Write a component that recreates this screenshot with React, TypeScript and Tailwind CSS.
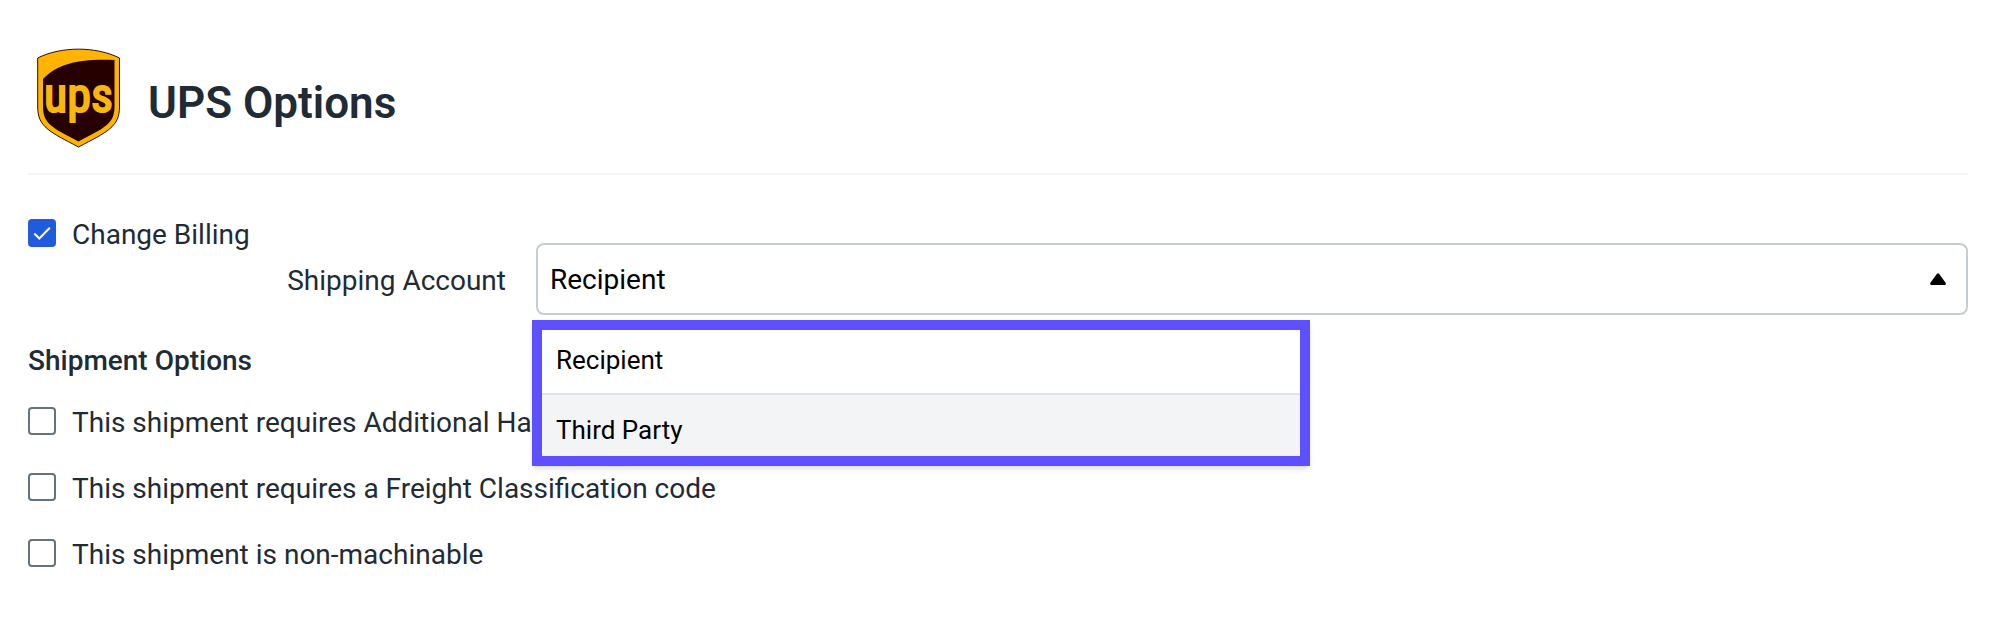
import { useState } from 'react';

function UpsLogo() {
  return (
    <svg role="img" aria-label="UPS" viewBox="0 0 84 100" className="h-[100px] w-[84px] shrink-0">
      <path
        d="M0.700 10 C24 -1.800 59 -1.800 82.500 10 V59 C82.500 79 70 84 41.500 99 C13 84 0.700 79 0.700 59 Z"
        fill="#ffb500"
        stroke="#2b0b08"
        strokeWidth="1"
      />
      <path
        d="M6 31 C22 14 47 10.500 77.500 12 V59 C77.500 76 67 80 41.500 93.500 C16 80 6 76 6 59 Z"
        fill="#260000"
      />
      <text
        x="41.500"
        y="64"
        textAnchor="middle"
        fill="#f8b70a"
        stroke="#f8b70a"
        strokeWidth="2"
        className="font-['Liberation_Sans_Narrow','Roboto_Condensed',Roboto,sans-serif] text-[48px] font-normal"
      >
        ups
      </text>
    </svg>
  );
}

function CheckOption({ label, initial = false }: { label: string; initial?: boolean }) {
  const [checked, setChecked] = useState(initial);
  return (
    <label className="flex w-fit items-start gap-4 leading-8">
      <span className="grid size-7 shrink-0">
        <input
          type="checkbox"
          checked={checked}
          onChange={(e) => setChecked(e.target.checked)}
          className="col-start-1 row-start-1 size-7 appearance-none rounded border-2 border-[#637381] bg-white checked:border-[#1f5bdc] checked:bg-[#1f5bdc]"
        />
        {checked && (
          <svg viewBox="0 0 28 28" fill="none" className="pointer-events-none col-start-1 row-start-1 size-7">
            <path d="M6.300 14.500 L11.300 19.500 L21.800 8.800" stroke="white" strokeWidth="2" />
          </svg>
        )}
      </span>
      {label}
    </label>
  );
}

const accounts = ['Recipient', 'Third Party'];

export default function App() {
  const [account, setAccount] = useState('Recipient');
  return (
    <main className="bg-white px-7 pt-12 pb-14 font-[Roboto,sans-serif] text-[28px] text-[#212b36]">
      <header className="flex items-center gap-[27px] border-b-2 border-[#f3f4f5] pb-[25px] pl-[9px]">
        <UpsLogo />
        <h1 className="pt-2.5 text-[44px] leading-[44px] font-semibold">UPS Options</h1>
      </header>

      <section className="mt-11 grid grid-cols-[508px_1fr]">
        <div className="flex flex-col gap-[14px]">
          <CheckOption label="Change Billing" initial />
          <label htmlFor="account" className="self-end pr-[30px] leading-8">
            Shipping Account
          </label>
        </div>
        <div className="relative mt-6">
          <div className="grid items-center">
            <select
              id="account"
              value={account}
              onChange={(e) => setAccount(e.target.value)}
              className="col-start-1 row-start-1 h-[72px] w-full appearance-none rounded-lg border-2 border-[#c4cdd5] bg-white px-3 pt-0.5 text-black"
            >
              {accounts.map((name) => (
                <option key={name}>{name}</option>
              ))}
            </select>
            <svg
              viewBox="0 0 16 12"
              className="pointer-events-none col-start-1 row-start-1 mr-[22px] h-3 w-4 justify-self-end"
            >
              <path d="M7 0.800 Q8 -0.400 9 0.800 L15.600 9.800 Q16.400 12 14.500 12 H1.500 Q-0.400 12 0.400 9.800 Z" fill="black" />
            </svg>
          </div>
          <ul
            role="listbox"
            aria-label="Shipping Account"
            className="absolute top-[77px] -left-1 z-10 w-[778px] border-10 border-[#5c50ff] bg-white text-[26px] leading-[30px] text-black shadow-md"
          >
            <li role="option" aria-selected="true" className="border-b-2 border-[#dfe3e8] px-[14px] pt-[15px] pb-[18px]">
              Recipient
            </li>
            <li role="option" aria-selected="false" className="bg-[#f3f4f6] px-[14px] pt-5 pb-[11px]">
              Third Party
            </li>
          </ul>
        </div>
      </section>

      <section className="mt-[30px]">
        <h2 className="leading-8 font-medium">Shipment Options</h2>
        <div className="mt-[30px] flex flex-col gap-[34px]">
          <CheckOption label="This shipment requires Additional Handling" />
          <CheckOption label="This shipment requires a Freight Classification code" />
          <CheckOption label="This shipment is non-machinable" />
        </div>
      </section>
    </main>
  );
}
